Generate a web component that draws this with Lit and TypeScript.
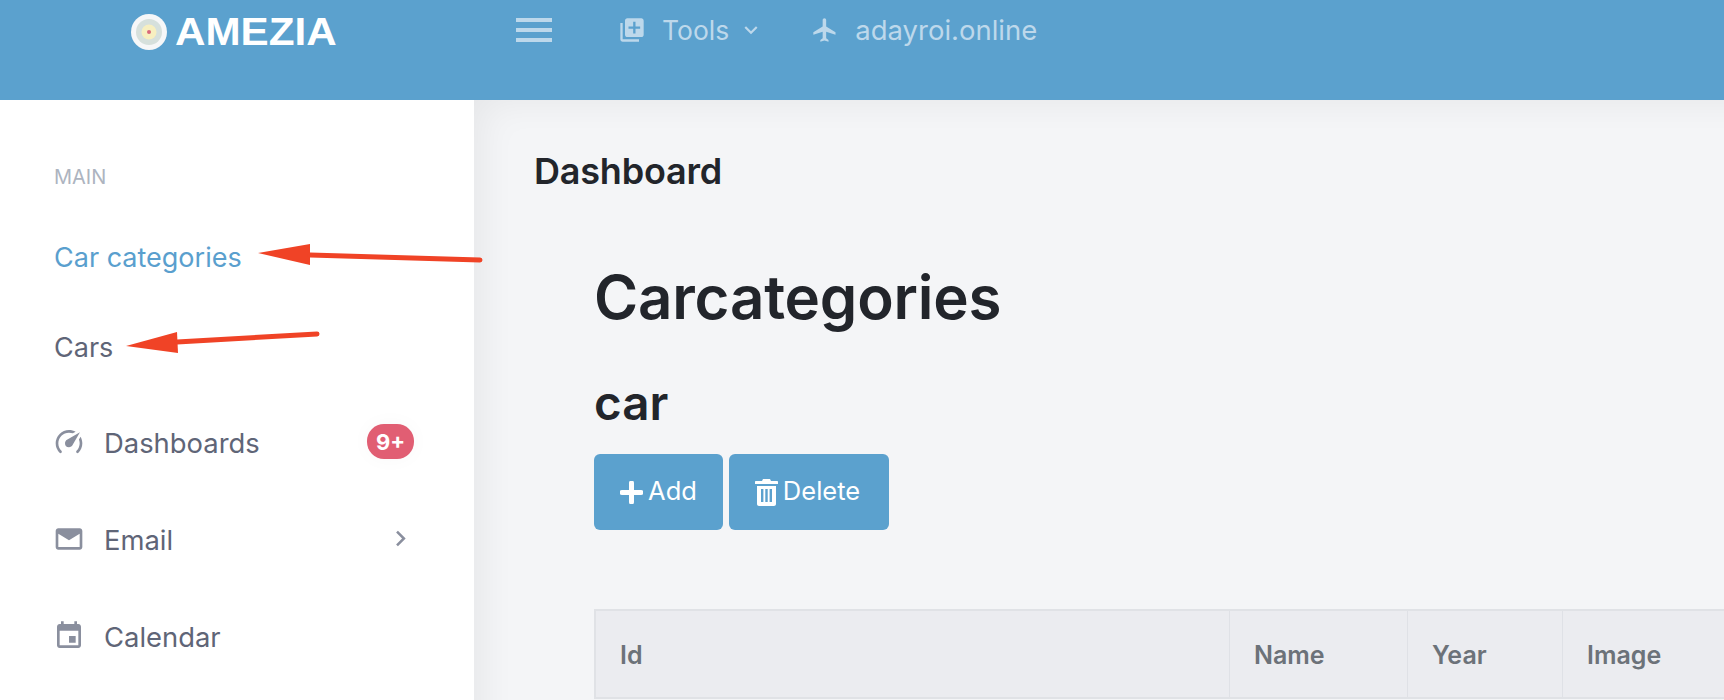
import { LitElement, html, css, svg } from "lit";
import { customElement } from "lit/decorators.js";

const icon = (d: string, cls = "") => html`<svg class="ic ${cls}" viewBox="0 0 24 24" fill="currentColor"><path d="${d}"></path></svg>`;

@customElement("app-root")
export class AppRoot extends LitElement {
  static styles = css`
    :host { display: block; width: 1724px; height: 700px; overflow: hidden; position: relative; font-family: Inter, "Noto Sans", sans-serif; background: #f4f5f7; }
    .top { height: 100px; background: #5ba1ce; display: flex; align-items: flex-start; color: #bdd8eb; box-sizing: border-box; }
    .brand { width: 516px; flex: none; padding: 14px 0 0 131px; box-sizing: border-box; display: flex; align-items: center; gap: 8px; height: 50px; }
    .logo { width: 36px; height: 36px; flex: none; }
    .word { font-family: "Liberation Sans", sans-serif; font-weight: 700; font-size: 38px; color: #fff; line-height: 36px; display: inline-block; transform: scaleX(1.11); transform-origin: left center; }
    .burger { width: 36px; flex: none; display: flex; flex-direction: column; gap: 6px; padding-top: 18px; }
    .burger i { display: block; height: 4px; background: #bdd8eb; }
    .tnav { display: flex; align-items: center; height: 60px; font-size: 26.5px; }
    .tnav .ic { width: 28px; height: 28px; flex: none; }
    .tools { margin-left: 66px; display: flex; align-items: center; }
    .tools span { margin-left: 16px; }
    .tools .chev { width: 26px; height: 26px; margin-left: 9px; }
    .site { margin-left: 47px; display: flex; align-items: center; font-size: 27.5px; }
    .site span { margin-left: 16px; }
    .body { display: flex; height: 600px; }
    aside { width: 474px; flex: none; background: #fff; padding: 0 0 0 54px; box-sizing: border-box; color: #5f6577; font-size: 27px; }
    .lab { height: 34px; margin-top: 60px; font-size: 20px; line-height: 34px; color: #adb4c0; font-weight: 400; }
    .plain { height: 90px; line-height: 90px; }
    .car1 { margin-top: 19px; color: #5a9fce; }
    .it { height: 97px; display: flex; align-items: center; padding-right: 60px; font-size: 27.4px; }
    .it .ic { width: 32px; height: 32px; color: #8a8f9e; flex: none; margin-left: -1px; }
    .it span.t { margin-left: 19px; flex: 1; padding-top: 2px; }
    .badge { background: #e15e73; color: #fff; font-size: 22px; font-weight: 700; width: 47px; height: 35px; border-radius: 17px; display: flex; align-items: center; justify-content: center; box-shadow: 0 0 20px rgba(0,0,0,.03); }
    .it .chev { width: 31px; height: 31px; margin-right: -2px; }
    main { flex: 1; min-width: 0; padding: 0 0 0 60px; box-shadow: inset 30px 24px 36px -22px rgba(0,0,0,.06); }
    .crumb { font-size: 36px; font-weight: 600; color: #22252b; line-height: 40px; margin: 0; padding-top: 51px; letter-spacing: -0.2px; }
    .inner { padding-left: 60px; }
    h1 { margin: 71px 0 0; font-size: 60px; line-height: 70px; font-weight: 600; color: #22252b; letter-spacing: -0.2px; }
    h2 { margin: 43px 0 0; font-size: 47.5px; line-height: 56px; font-weight: 600; color: #22252b; }
    .btns { display: flex; gap: 6px; margin-top: 23px; }
    .btn { height: 76px; border-radius: 6px; background: #5ba1ce; color: #fff; font-size: 25.5px; display: flex; align-items: center; justify-content: center; box-sizing: border-box; gap: 5px; }
    .btn span { padding-bottom: 3px; }
    .add { width: 129px; }
    .del { width: 160px; }
    .del svg { margin-left: -3px; }
    .btn svg { flex: none; }
    .tbl { margin-top: 79px; display: grid; grid-template-columns: 633px 178px 155px 400px; height: 90px; background: #ebecf0; border: 2px solid #e0e2e6; box-sizing: border-box; width: 1369px; }
    .tbl div { padding: 2px 0 0 24px; display: flex; align-items: center; font-size: 25px; font-weight: 600; color: #6c7279; border-left: 1px solid #dfe1e6; }
    .tbl div:first-child { border-left: 0; }
    .arrows { position: absolute; left: 0; top: 0; width: 1724px; height: 700px; pointer-events: none; }
  `;

  render() {
    return html`
      <div class="top">
        <div class="brand">
          <svg class="logo" viewBox="0 0 36 36">
            <circle cx="18" cy="18" r="18" fill="#f6f7f8"></circle>
            <circle cx="18" cy="18" r="13" fill="#d6e0dc"></circle>
            <circle cx="18" cy="18" r="7.5" fill="#f7efc0"></circle>
            <circle cx="18" cy="18" r="2" fill="#d8697a"></circle>
          </svg>
          <span class="word">AMEZIA</span>
        </div>
        <div class="burger"><i></i><i></i><i></i></div>
        <div class="tnav">
          <div class="tools">
            ${icon("M4 6H2v14c0 1.1.9 2 2 2h14v-2H4V6zm16-4H8c-1.1 0-2 .9-2 2v12c0 1.1.9 2 2 2h12c1.1 0 2-.9 2-2V4c0-1.1-.9-2-2-2zm-1 9h-4v4h-2v-4H9V9h4V5h2v4h4v2z")}
            <span>Tools</span>
            ${icon("M7.4 8.6 12 13.2l4.6-4.6L18 10l-6 6-6-6z", "chev")}
          </div>
          <div class="site">
            ${icon("M21 16v-2l-8-5V3.5c0-.83-.67-1.5-1.5-1.5S10 2.67 10 3.5V9l-8 5v2l8-2.5V19l-2 1.5V22l3.5-1 3.5 1v-1.5L13 19v-5.5l8 2.5z")}
            <span>adayroi.online</span>
          </div>
        </div>
      </div>
      <div class="body">
        <aside>
          <div class="lab">MAIN</div>
          <div class="plain car1">Car categories</div>
          <div class="plain">Cars</div>
          <div class="it">
            ${icon("M12 16a3 3 0 0 1-3-3c0-1.12.61-2.11 1.5-2.62l9.71-5.62-5.53 9.58c-.5.98-1.51 1.66-2.68 1.66m0-13c1.81 0 3.5.5 4.97 1.32l-2.1 1.21C14 5.19 13 5 12 5a8 8 0 0 0-8 8c0 2.21.89 4.21 2.34 5.65h.01c.39.39.39 1.02 0 1.41-.39.39-1.03.39-1.42.01A9.969 9.969 0 0 1 2 13 10 10 0 0 1 12 3m10 10c0 2.76-1.12 5.26-2.93 7.07-.39.38-1.02.38-1.41-.01a.996.996 0 0 1 0-1.41A7.95 7.95 0 0 0 20 13c0-1-.19-2-.54-2.9L20.67 8C21.5 9.5 22 11.18 22 13z")}
            <span class="t">Dashboards</span>
            <span class="badge">9+</span>
          </div>
          <div class="it">
            ${icon("M20 4H4c-1.1 0-1.99.9-1.99 2L2 18c0 1.1.9 2 2 2h16c1.1 0 2-.9 2-2V6c0-1.1-.9-2-2-2zm0 14H4V8l8 5 8-5v10z")}
            <span class="t">Email</span>
            ${icon("M8.6 7.4 10 6l6 6-6 6-1.4-1.4L13.2 12z", "chev")}
          </div>
          <div class="it">
            ${icon("M17 12h-5v5h5v-5zM16 1v2H8V1H6v2H5c-1.11 0-1.99.9-1.99 2L3 19c0 1.1.89 2 2 2h14c1.1 0 2-.9 2-2V5c0-1.1-.9-2-2-2h-1V1h-2zm3 18H5V8h14v11z")}
            <span class="t">Calendar</span>
          </div>
        </aside>
        <main>
          <p class="crumb">Dashboard</p>
          <div class="inner">
            <h1>Carcategories</h1>
            <h2>car</h2>
            <div class="btns">
              <div class="btn add">
                <svg width="23" height="23" viewBox="0 0 23 23"><path d="M11.5 2v19M2 11.5h19" stroke="#fff" stroke-width="5" stroke-linecap="round"></path></svg>
                <span>Add</span>
              </div>
              <div class="btn del">
                <svg width="23" height="27" viewBox="0 0 23 27"><path fill="#fff" fill-rule="evenodd" d="M8 0h7l1 2h6c.6 0 1 .4 1 1v2H0V3c0-.6.4-1 1-1h6zM2 7h19v18c0 1.1-.9 2-2 2H4c-1.1 0-2-.9-2-2zm4 3v13h2.4V10zm4.3 0v13h2.4V10zm4.3 0v13H17V10z"></path></svg>
                <span>Delete</span>
              </div>
            </div>
            <div class="tbl"><div>Id</div><div>Name</div><div>Year</div><div>Image</div></div>
          </div>
        </main>
      </div>
      <svg class="arrows" viewBox="0 0 1724 700">
        ${svg`<path d="M258 253 310 244 310 265Z" fill="#f04326"></path>
        <path d="M310 255 480 260" stroke="#f04326" stroke-width="5" stroke-linecap="round"></path>
        <path d="M126 346 177 332 178 353Z" fill="#f04326"></path>
        <path d="M177 342 317 334" stroke="#f04326" stroke-width="5" stroke-linecap="round"></path>`}
      </svg>
    `;
  }
}
